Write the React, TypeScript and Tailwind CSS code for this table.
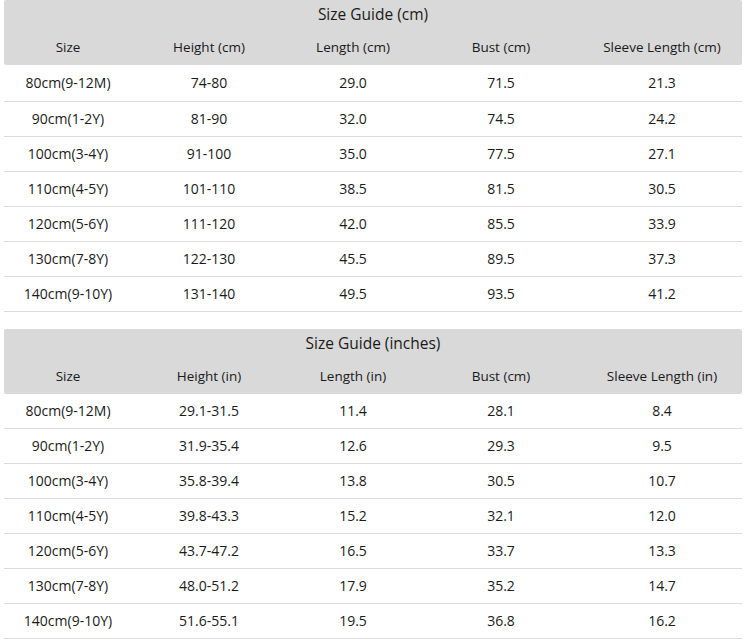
import React from "react";

type Table = {
  title: string;
  headers: string[];
  rows: string[][];
  firstRowTall?: boolean;
};

const tables: Table[] = [
  {
    title: "Size Guide (cm)",
    headers: ["Size", "Height (cm)", "Length (cm)", "Bust (cm)", "Sleeve Length (cm)"],
    firstRowTall: true,
    rows: [
      ["80cm(9-12M)", "74-80", "29.0", "71.5", "21.3"],
      ["90cm(1-2Y)", "81-90", "32.0", "74.5", "24.2"],
      ["100cm(3-4Y)", "91-100", "35.0", "77.5", "27.1"],
      ["110cm(4-5Y)", "101-110", "38.5", "81.5", "30.5"],
      ["120cm(5-6Y)", "111-120", "42.0", "85.5", "33.9"],
      ["130cm(7-8Y)", "122-130", "45.5", "89.5", "37.3"],
      ["140cm(9-10Y)", "131-140", "49.5", "93.5", "41.2"],
    ],
  },
  {
    title: "Size Guide (inches)",
    headers: ["Size", "Height (in)", "Length (in)", "Bust (cm)", "Sleeve Length (in)"],
    rows: [
      ["80cm(9-12M)", "29.1-31.5", "11.4", "28.1", "8.4"],
      ["90cm(1-2Y)", "31.9-35.4", "12.6", "29.3", "9.5"],
      ["100cm(3-4Y)", "35.8-39.4", "13.8", "30.5", "10.7"],
      ["110cm(4-5Y)", "39.8-43.3", "15.2", "32.1", "12.0"],
      ["120cm(5-6Y)", "43.7-47.2", "16.5", "33.7", "13.3"],
      ["130cm(7-8Y)", "48.0-51.2", "17.9", "35.2", "14.7"],
      ["140cm(9-10Y)", "51.6-55.1", "19.5", "36.8", "16.2"],
    ],
  },
];

const colClasses = ["w-[128px]", "w-[154px]", "w-[134px]", "w-[162px]", "w-[160px]"];

function SizeTable({ t }: { t: Table }) {
  return (
    <div className="w-[738px]">
      <div className="bg-[#d9d9d9] rounded-[2px] h-[65px] flex flex-col">
        <div className="h-[30px] flex items-center justify-center text-[15.5px] text-[#1a1a1a]">
          {t.title}
        </div>
        <div className="h-[35px] flex items-center">
          {t.headers.map((h, i) => (
            <div key={i} className={`${colClasses[i]} text-center text-[13.5px] text-[#1a1a1a]`}>
              {h}
            </div>
          ))}
        </div>
      </div>
      {t.rows.map((r, ri) => (
        <div
          key={ri}
          className={`${ri === 0 && t.firstRowTall ? "h-[37px]" : "h-[35px]"} pb-[2px] flex items-center border-b border-[#dcdcdc]`}
        >
          {r.map((c, ci) => (
            <div key={ci} className={`${colClasses[ci]} text-center text-[14px] text-[#1a1a1a]`}>
              {c}
            </div>
          ))}
        </div>
      ))}
    </div>
  );
}

export default function App() {
  return (
    <div
      className="w-[751px] h-[643px] bg-white pl-[4px] flex flex-col gap-[17px] overflow-hidden"
      style={{ fontFamily: '"Open Sans", "Noto Sans", sans-serif' }}
    >
      <SizeTable t={tables[0]} />
      <SizeTable t={tables[1]} />
    </div>
  );
}
